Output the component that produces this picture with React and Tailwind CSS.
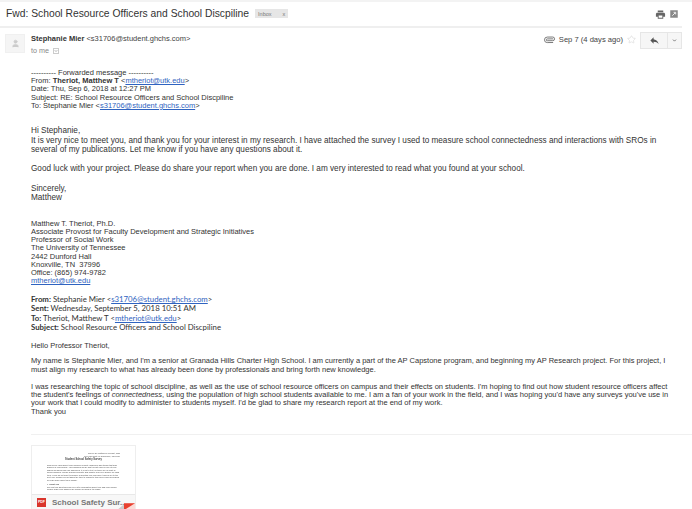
import React from 'react';
import { Paperclip, Star, ChevronDown, User } from 'lucide-react';

function Mail({ children }) {
  return <span className="text-[#2f63c0] underline">{children}</span>;
}

function PrintIcon() {
  return (
    <svg viewBox="0 0 24 24" className="w-[11px] h-[11px]" fill="#666">
      <path d="M19 8H5c-1.7 0-3 1.3-3 3v6h4v4h12v-4h4v-6c0-1.7-1.3-3-3-3zm-3 11H8v-5h8v5zM18 3H6v4h12V3z" />
    </svg>
  );
}

function PopoutIcon() {
  return (
    <svg viewBox="0 0 24 24" className="w-[10px] h-[10px]" fill="#888">
      <path d="M3 3h18v18H3z" />
      <path d="M8 16l7-7M11 8h5v5" stroke="#eee" strokeWidth="2.4" fill="none" />
    </svg>
  );
}

function ReplyIcon() {
  return (
    <svg viewBox="0 0 24 24" className="w-[11px] h-[11px]" fill="#555">
      <path d="M10 9V5l-7 7 7 7v-4.1c5 0 8.5 1.6 11 5.1-1-5-4-10-11-11z" />
    </svg>
  );
}

function Header() {
  return (
    <div>
      {/* Subject */}
      <div className="h-[2px] bg-[#f3f3f3]" />
      <div className="flex items-center justify-between h-[26px] pl-[6px] pr-[3px] mr-[10px] border-b-2 border-[#efefef]">
        <div className="flex items-center">
          <span className="text-[10.3px] text-[#333] leading-none">Fwd: School Resource Officers and School Discpiline</span>
          <span className="ml-[6px] flex items-center gap-[11px] h-[9px] px-[3px] bg-[#e6e6e6] text-[5.5px] text-[#777]">
            <span>Inbox</span>
            <span>x</span>
          </span>
        </div>
        <div className="flex items-center gap-[3px]">
          <PrintIcon />
          <PopoutIcon />
        </div>
      </div>

      {/* Sender row */}
      <div className="flex justify-between pl-[5px] pr-[10px] pt-[6px]">
        <div className="flex">
          <div className="flex items-center justify-center w-[20px] h-[19px] bg-[#f5f5f5] border border-[#f0f0f0]">
            <User className="w-[9px] h-[9px] text-[#ccc]" fill="#ccc" />
          </div>
          <div className="ml-[6px]">
            <div className="text-[7.5px] leading-[10px] text-[#444]">
              <b className="text-[#333]">Stephanie Mier</b> &lt;s31706@student.ghchs.com&gt;
            </div>
            <div className="flex items-center mt-[2px] text-[7.2px] leading-[10px] text-[#888]">
              to me
              <span className="flex items-center justify-center ml-[4px] w-[6px] h-[6px] border border-[#ccc]">
                <ChevronDown className="w-[4px] h-[4px]" strokeWidth={4} />
              </span>
            </div>
          </div>
        </div>
        <div className="flex items-start">
          <div className="flex items-center h-[11px] text-[7.6px] text-[#444]">
            <Paperclip className="w-[11px] h-[11px] mr-[4px] text-[#777] rotate-45" />
            Sep 7 (4 days ago)
            <Star className="w-[9px] h-[9px] ml-[4px] text-[#ddd]" />
          </div>
          <div className="flex ml-[4px] h-[17px] mt-[-2px] border border-[#e6e6e6] bg-[#f6f6f6]">
            <div className="flex items-center justify-center w-[27px] border-r border-[#e6e6e6]">
              <ReplyIcon />
            </div>
            <div className="flex items-center justify-center w-[13px]">
              <ChevronDown className="w-[5px] h-[5px] text-[#666]" strokeWidth={4} />
            </div>
          </div>
        </div>
      </div>
    </div>
  );
}

function Attachment() {
  return (
    <div className="flex flex-col ml-[31px] mt-[10px] w-[105px] h-[65px] border border-b-0 border-[#eee] overflow-hidden">
      <div className="h-[48px] px-[15px] pt-[6px] text-[2.1px] leading-[2.5px] text-[#444] shrink-0 overflow-hidden blur-[0.25px]">
        <div className="text-right">Survey by Matthew T. Theriot, PhD<br />The University of Tennessee, Knoxville</div>
        <div className="mt-[2px] text-center font-bold text-[2.6px]">Student School Safety Survey</div>
        <div className="mt-[2px]">
          This survey asks about your school's security measures and things that may happen in your school. Your answers will be kept private and no one at your school will know how you answered. It is not a test, so there are no right or wrong answers. Please answer honestly and choose only one answer for each item. If you do not want to answer a question you may skip it and go on to the next one. Thank you for taking the time to complete this survey and for helping us learn more about your school.
        </div>
        <div className="mt-[2px] font-bold">I. About You</div>
        <div>The first few questions ask for a little information about you and your school. Please mark your answers by circling or filling in the blank.</div>
      </div>
      <div className="relative flex items-center flex-1 bg-[#f7f7f7] border-t border-[#e8e8e8] pl-[5px]">
        <span className="flex items-center justify-center w-[9px] h-[9px] bg-[#d9352c] text-white text-[3.5px] font-bold">PDF</span>
        <span className="ml-[6px] text-[8px] font-bold text-[#777] whitespace-nowrap">School Safety Sur...</span>
        <span className="absolute right-[11px] bottom-0 w-[7px] h-[6px] bg-[#ccc] [clip-path:polygon(100%_0,100%_100%,0_100%)]" />
        <span className="absolute right-0 bottom-0 w-[11px] h-[7px] bg-[#fbdcd8]" />
        <span className="absolute right-0 bottom-0 w-[11px] h-[7px] bg-[#e8402f] [clip-path:polygon(0_0,100%_0,0_100%)]" />
      </div>
    </div>
  );
}

export default function App() {
  return (
    <div className="w-[692px] h-[509px] overflow-hidden bg-white font-['Liberation_Sans',Arial,sans-serif]">
      <Header />

      <div className="pl-[31px] pr-[10px] pt-[13px] text-[7.5px] leading-[8.2px] text-[#333]">
        <div>
          ---------- Forwarded message ----------<br />
          From: <b>Theriot, Matthew T</b> &lt;<Mail>mtheriot@utk.edu</Mail>&gt;<br />
          Date: Thu, Sep 6, 2018 at 12:27 PM<br />
          Subject: RE: School Resource Officers and School Discpiline<br />
          To: Stephanie Mier &lt;<Mail>s31706@student.ghchs.com</Mail>&gt;
        </div>

        <div className="mt-[16px] text-[8.2px] leading-[9.6px]">
          Hi Stephanie,<br />
          It is very nice to meet you, and thank you for your interest in my research. I have attached the survey I used to measure school connectedness and interactions with SROs in<br />
          several of my publications. Let me know if you have any questions about it.
        </div>
        <div className="mt-[9.6px] text-[8.2px] leading-[9.6px]">
          Good luck with your project. Please do share your report when you are done. I am very interested to read what you found at your school.
        </div>
        <div className="mt-[9.6px] text-[8.2px] leading-[9.6px]">
          Sincerely,<br />
          Matthew
        </div>

        <div className="mt-[17px]">
          Matthew T. Theriot, Ph.D.<br />
          Associate Provost for Faculty Development and Strategic Initiatives<br />
          Professor of Social Work<br />
          The University of Tennessee<br />
          2442 Dunford Hall<br />
          Knoxville, TN&nbsp; 37996<br />
          Office: (865) 974-9782<br />
          <Mail>mtheriot@utk.edu</Mail>
        </div>

        <div className="mt-[9.6px] font-['Lato',sans-serif] text-[7.8px] leading-[9.3px]">
          <b>From:</b> Stephanie Mier &lt;<Mail>s31706@student.ghchs.com</Mail>&gt;<br />
          <b>Sent:</b> Wednesday, September 5, 2018 10:51 AM<br />
          <b>To:</b> Theriot, Matthew T &lt;<Mail>mtheriot@utk.edu</Mail>&gt;<br />
          <b>Subject:</b> School Resource Officers and School Discpiline
        </div>

        <div className="mt-[10px]">Hello Professor Theriot,</div>
        <div className="mt-[7px] leading-[8.6px]">
          My name is Stephanie Mier, and I'm a senior at Granada Hills Charter High School. I am currently a part of the AP Capstone program, and beginning my AP Research project. For this project, I<br />
          must align my research to what has already been done by professionals and bring forth new knowledge.
        </div>
        <div className="mt-[8px] leading-[8.4px]">
          I was researching the topic of school discipline, as well as the use of school resource officers on campus and their effects on students. I'm hoping to find out how student resource officers affect<br />
          the student's feelings of <i>connectedness</i>, using the population of high school students available to me. I am a fan of your work in the field, and I was hoping you'd have any surveys you've use in<br />
          your work that I could modify to administer to students myself. I'd be glad to share my research report at the end of my work.<br />
          Thank you
        </div>
      </div>

      <div className="ml-[31px] mt-[18px] h-px bg-[#f0f0f0]" />
      <Attachment />
    </div>
  );
}
